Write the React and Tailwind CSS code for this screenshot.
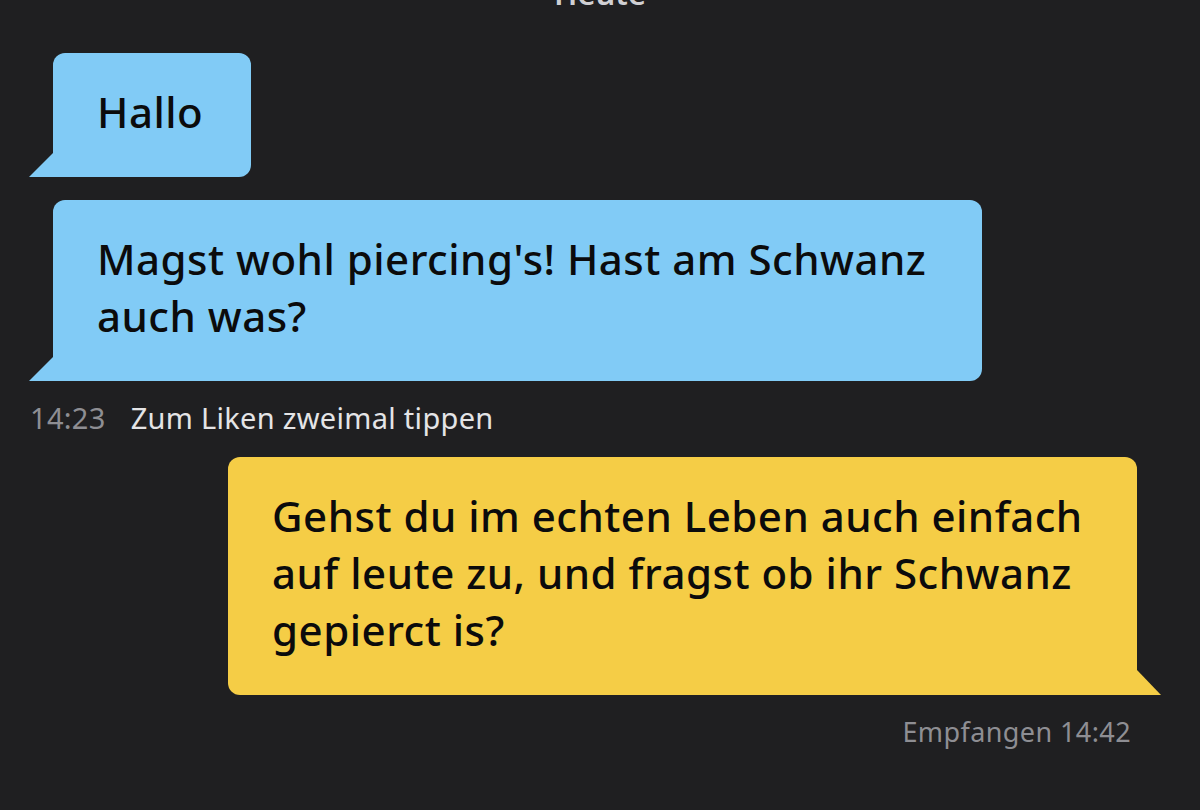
import React from 'react';

// little corner tail that hangs off the bottom of a bubble
const Tail = ({ side, color }) => {
  if (side === 'left') {
    return (
      <svg className="absolute bottom-0 -left-[24px]" width="24" height="24" viewBox="0 0 24 24">
        <polygon points="24,0 24,24 0,24" fill={color} />
      </svg>
    );
  }
  return (
    <svg className="absolute bottom-0 -right-[24px]" width="24" height="25" viewBox="0 0 24 25">
      <polygon points="0,0 24,25 0,25" fill={color} />
    </svg>
  );
};

const Bubble = ({ side, className, children }) => {
  const incoming = side === 'left';
  const color = incoming ? '#81cbf6' : '#f5cd46';
  return (
    <div
      className={`relative pt-[30px] pb-[37px] pl-[44px] pr-[48px] text-[42px] leading-[57px] font-medium tracking-[0.5px] text-[#0b0b0c] ${
        incoming ? 'bg-[#81cbf6] rounded-[12px] rounded-bl-none' : 'bg-[#f5cd46] rounded-[12px] rounded-br-none'
      } ${className || ''}`}
    >
      {children}
      <Tail side={side} color={color} />
    </div>
  );
};

export default function App() {
  return (
    <div className="min-h-[810px] w-full bg-[#1f1f21] overflow-hidden font-['Noto_Sans','Roboto',sans-serif]">
      <div className="-mt-[22px] text-center text-[31px] leading-none font-semibold text-[#cfcfd3]">Heute</div>

      <div className="mt-[44px] pl-[53px] flex flex-col items-start">
        <Bubble side="left">Hallo</Bubble>
        <Bubble side="left" className="mt-[23px] w-[929px] whitespace-nowrap">
          Magst wohl piercing's! Hast am Schwanz
          <br />
          auch was?
        </Bubble>
      </div>

      <div className="mt-[22px] pl-[30px] flex items-baseline gap-[25px] text-[29px] leading-none tracking-[0.3px]">
        <span className="text-[#8e8e93]">14:23</span>
        <span className="text-[#e4e4e6]">Zum Liken zweimal tippen</span>
      </div>

      <div className="mt-[25px] pr-[63px] flex flex-col items-end">
        <Bubble side="right" className="w-[909px] whitespace-nowrap">
          Gehst du im echten Leben auch einfach
          <br />
          auf leute zu, und fragst ob ihr Schwanz
          <br />
          gepierct is?
        </Bubble>
        <div className="mt-[23px] mr-[6px] text-[27px] leading-none tracking-[0.4px] text-[#8e8e93]">Empfangen 14:42</div>
      </div>
    </div>
  );
}
